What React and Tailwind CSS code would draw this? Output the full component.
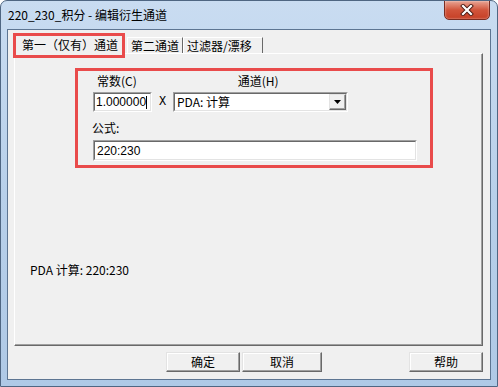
import React from 'react';

const cjk = "font-['Noto_Sans_CJK_SC','Liberation_Sans',sans-serif]";
const sans = "font-['Liberation_Sans','Noto_Sans_CJK_SC',sans-serif]";

// classic sunken edit box
const Sunken = ({ className = '', children }) => (
  <div className={`border border-t-[#a0a0a0] border-l-[#a0a0a0] border-b-white border-r-white ${className}`}>
    <div className="h-full w-full border border-t-[#696969] border-l-[#696969] border-b-[#e3e3e3] border-r-[#e3e3e3] bg-white flex items-center">
      {children}
    </div>
  </div>
);

const Button = ({ label, className = '' }) => (
  <div className={`h-[20px] border border-t-[#e3e3e3] border-l-[#e3e3e3] border-b-[#696969] border-r-[#696969] bg-[#f0f0f0] shadow-[inset_-1px_-1px_0_#a0a0a0,inset_1px_1px_0_#ffffff] flex items-center justify-center text-[12px] leading-none text-black ${cjk} ${className}`}>
    {label}
  </div>
);

const Tab = ({ label, className = '' }) => (
  <div className={`h-[16px] border-l border-l-white border-r border-r-[#696969] border-t border-t-white flex items-center text-[12px] leading-none ${cjk} ${className}`}>
    {label}
  </div>
);

export default function App() {
  return (
    <div className="w-[498px] h-[387px] rounded-t-[7px] border border-[#4f6682] bg-gradient-to-b from-[#c9dcf1] via-[#b8d0ea] to-[#afc9e6] flex flex-col overflow-hidden">
      {/* title bar */}
      <div className="h-[28px] flex items-start shrink-0">
        <span className={`mt-[6px] ml-[7px] text-[12px] leading-[16px] text-black ${cjk}`}>220_230_积分 - 编辑衍生通道</span>
        <div className="ml-auto mr-[7px] mt-[-1px] w-[46px] h-[20px] rounded-b-[5px] border border-[#7a2d22] bg-gradient-to-b from-[#e7a393] via-[#d1543b] to-[#c63f25] shadow-[inset_0_0_2px_rgba(255,255,255,0.7)] flex items-center justify-center">
          <svg width="14" height="12" viewBox="0 0 14 12">
            <path d="M3 2 L11 10 M11 2 L3 10" stroke="#4a1a12" strokeWidth="4" strokeLinecap="square" />
            <path d="M3 2 L11 10 M11 2 L3 10" stroke="#ffffff" strokeWidth="2.2" strokeLinecap="square" />
          </svg>
        </div>
      </div>

      {/* client area */}
      <div className="mx-[6px] mb-[6px] flex-1 border border-[#5d7592] bg-[#f0f0f0] flex flex-col">
        {/* tabs */}
        <div className="pl-[6px] pt-[4px] flex items-end h-[23px] shrink-0">
          <div className="relative z-10 h-[20px] w-[111px] -mb-px bg-[#f0f0f0] border-l border-l-white border-t border-t-white border-r border-r-[#696969] flex items-center pl-[7px]">
            <span className={`text-[12px] leading-none ${cjk}`}>第一（仅有）通道</span>
            <span className="absolute left-[-2px] top-[-2px] right-[-1px] bottom-[-4px] border-[3px] border-[#e94b4b]" />
          </div>
          <Tab label="第二通道" className="ml-[2px] w-[56px] pl-[3px]" />
          <Tab label="过滤器/漂移" className="w-[80px] pl-[3px]" />
        </div>

        {/* tab page */}
        <div className="ml-[6px] w-[469px] h-[293px] border border-t-white border-l-white border-b-[#696969] border-r-[#696969] shadow-[inset_-1px_-1px_0_#a0a0a0] flex flex-col shrink-0">
          <div className="ml-[60px] mt-[14px] w-[358px] h-[100px] border-[3px] border-[#e94b4b] flex flex-col">
            <div className={`mt-[3px] h-[14px] flex items-center text-[12px] leading-none ${cjk}`}>
              <span className="ml-[19px]">常数(C)</span>
              <span className="ml-[101px]">通道(H)</span>
            </div>
            <div className="mt-[4px] flex items-center">
              <Sunken className="ml-[15px] w-[59px] h-[20px]">
                <span className={`pl-[1px] text-[12px] leading-none ${sans}`}>1.000000</span>
                <span className="w-px h-[13px] bg-black" />
              </Sunken>
              <span className={`ml-[7px] w-[14px] text-[12px] leading-none font-['Liberation_Mono',monospace]`}>X</span>
              <Sunken className="w-[175px] h-[20px]">
                <span className={`pl-[2px] text-[12px] leading-none flex-1 ${cjk}`}>PDA: 计算</span>
                <div className="w-[17px] h-[16px] border border-t-[#e3e3e3] border-l-[#e3e3e3] border-b-[#696969] border-r-[#696969] bg-[#f0f0f0] shadow-[inset_-1px_-1px_0_#a0a0a0] flex items-center justify-center">
                  <svg width="7" height="4" viewBox="0 0 7 4">
                    <path d="M0 0 H7 L3.5 4 Z" fill="#000" />
                  </svg>
                </div>
              </Sunken>
            </div>
            <div className={`mt-[9px] ml-[14px] h-[14px] flex items-center text-[12px] leading-none ${cjk}`}>公式:</div>
            <Sunken className="mt-[5px] ml-[15px] w-[324px] h-[21px]">
              <span className={`pl-[2px] text-[12px] leading-none ${sans}`}>220:230</span>
            </Sunken>
          </div>
          <div className={`mt-[95px] ml-[15px] h-[14px] flex items-center text-[12px] leading-none ${cjk}`}>PDA 计算: 220:230</div>
        </div>

        {/* buttons */}
        <div className="mt-[6px] flex items-center pr-[7px]">
          <Button label="确定" className="ml-[158px] w-[74px] border-[#7a7a7a]" />
          <Button label="取消" className="ml-[2px] w-[80px]" />
          <Button label="帮助" className="ml-auto w-[74px]" />
        </div>
      </div>
    </div>
  );
}
